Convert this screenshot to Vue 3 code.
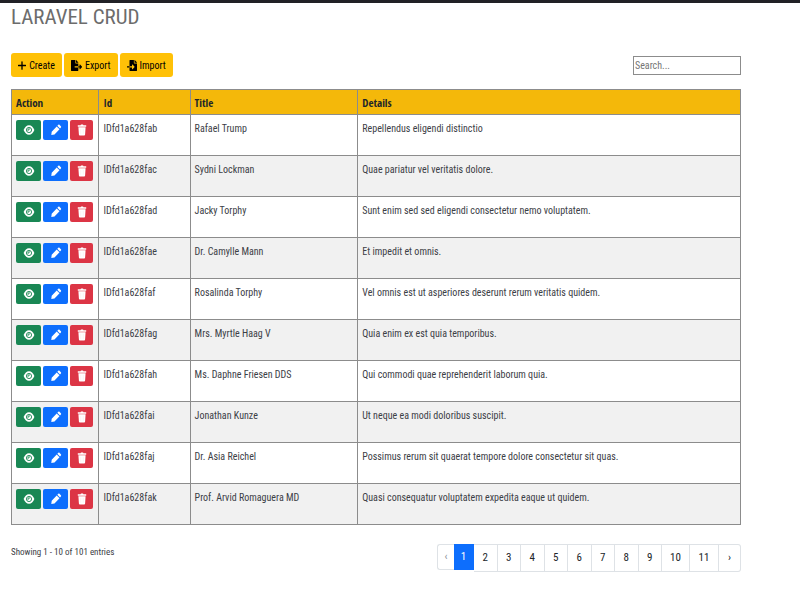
<script setup>
import { ref, computed } from 'vue'

const search = ref('')
const page = ref(1)
const pages = [1, 2, 3, 4, 5, 6, 7, 8, 9, 10, 11]

const entries = [
  { id: 'IDfd1a628fab', title: 'Rafael Trump', details: 'Repellendus eligendi distinctio' },
  { id: 'IDfd1a628fac', title: 'Sydni Lockman', details: 'Quae pariatur vel veritatis dolore.' },
  { id: 'IDfd1a628fad', title: 'Jacky Torphy', details: 'Sunt enim sed sed eligendi consectetur nemo voluptatem.' },
  { id: 'IDfd1a628fae', title: 'Dr. Camylle Mann', details: 'Et impedit et omnis.' },
  { id: 'IDfd1a628faf', title: 'Rosalinda Torphy', details: 'Vel omnis est ut asperiores deserunt rerum veritatis quidem.' },
  { id: 'IDfd1a628fag', title: 'Mrs. Myrtle Haag V', details: 'Quia enim ex est quia temporibus.' },
  { id: 'IDfd1a628fah', title: 'Ms. Daphne Friesen DDS', details: 'Qui commodi quae reprehenderit laborum quia.' },
  { id: 'IDfd1a628fai', title: 'Jonathan Kunze', details: 'Ut neque ea modi doloribus suscipit.' },
  { id: 'IDfd1a628faj', title: 'Dr. Asia Reichel', details: 'Possimus rerum sit quaerat tempore dolore consectetur sit quas.' },
  { id: 'IDfd1a628fak', title: 'Prof. Arvid Romaguera MD', details: 'Quasi consequatur voluptatem expedita eaque ut quidem.' }
]

const rows = computed(() => {
  const q = search.value.toLowerCase()
  return entries.filter((e) => (e.id + e.title + e.details).toLowerCase().includes(q))
})
</script>

<template>
  <div class="page">
    <main class="content">
      <h1>LARAVEL CRUD</h1>

      <div class="toolbar">
        <div class="tools">
          <button type="button" class="tool">
            <svg class="plus" viewBox="0 0 8 9" aria-hidden="true"><path d="M4 .8v7.4M.5 4.500h7" stroke="currentColor" stroke-width="1.300" stroke-linecap="round" /></svg>
            Create
          </button>
          <button type="button" class="tool">
            <svg class="file" viewBox="0 0 576 512" preserveAspectRatio="none" aria-hidden="true"><path fill="currentColor" d="M384 121.900c0-6.300-2.500-12.400-7-16.900L279.100 7c-4.500-4.500-10.600-7-17-7H256v128h128zM571 308l-95.700-96.400c-10.100-10.100-27.400-3-27.400 11.300V288h-64v64h64v65.200c0 14.300 17.300 21.400 27.400 11.300L571 332c6.600-6.600 6.600-17.400 0-24zm-379 28v-32c0-8.800 7.200-16 16-16h176V160H248c-13.200 0-24-10.800-24-24V0H24C10.700 0 0 10.700 0 24v464c0 13.300 10.700 24 24 24h336c13.300 0 24-10.700 24-24V352H208c-8.800 0-16-7.200-16-16z" /></svg>
            Export
          </button>
          <button type="button" class="tool">
            <svg class="file import" viewBox="0 0 512 512" preserveAspectRatio="none" aria-hidden="true"><path fill="currentColor" d="M16 288c-8.800 0-16 7.200-16 16v32c0 8.800 7.200 16 16 16h112v-64zm489-183L407.100 7c-4.500-4.500-10.600-7-17-7H384v128h128v-6.100c0-6.300-2.500-12.400-7-16.900zm-153 31V0H152c-13.300 0-24 10.700-24 24v264h128v-65.200c0-14.300 17.300-21.400 27.400-11.300L379 308c6.600 6.700 6.600 17.400 0 24l-95.700 96.400c-10.100 10.100-27.400 3-27.400-11.300V352H128v136c0 13.300 10.700 24 24 24h336c13.300 0 24-10.700 24-24V160H376c-13.200 0-24-10.800-24-24z" /></svg>
            Import
          </button>
        </div>
        <input v-model="search" class="search" type="search" placeholder="Search..." aria-label="Search entries" />
      </div>

      <table>
        <colgroup>
          <col class="col-action" />
          <col class="col-id" />
          <col class="col-title" />
          <col />
        </colgroup>
        <thead>
          <tr>
            <th scope="col">Action</th>
            <th scope="col">Id</th>
            <th scope="col">Title</th>
            <th scope="col">Details</th>
          </tr>
        </thead>
        <tbody>
          <tr v-for="entry in rows" :key="entry.id">
            <td>
              <div class="actions">
                <button type="button" class="view" :aria-label="'View ' + entry.title">
                  <svg viewBox="0 0 12 12" aria-hidden="true">
                    <path d="M.6 6C2 3 3.600 1.300 6 1.300S10 3 11.400 6C10 9 8.400 10.700 6 10.700S2 9 .6 6z" fill="#fff" />
                    <circle cx="6" cy="6" r="2.600" fill="#fff" stroke="#198754" stroke-width=".9" />
                    <path d="M6 4v2H4.200" fill="none" stroke="#198754" stroke-width=".9" />
                  </svg>
                </button>
                <button type="button" class="edit" :aria-label="'Edit ' + entry.title">
                  <svg viewBox="0 0 12 12" aria-hidden="true">
                    <path d="M1.300 11l.4-3.300 5-5.300 2.800 2.800-5 5.300zM7.300 1.800l.9-.9c.4-.4 1-.4 1.400 0l1.300 1.300c.4.4.4 1 0 1.400l-.9.9z" fill="#fff" />
                  </svg>
                </button>
                <button type="button" class="delete" :aria-label="'Delete ' + entry.title">
                  <svg viewBox="0 0 12 12" aria-hidden="true">
                    <path d="M1.800 1.200h2.700l.5-.8h2l.5.8h2.700v1.500H1.800zM2.400 3.200h7.200L9.100 10.600c0 .6-.4.900-.9.900H3.800c-.5 0-.9-.3-.9-.9z" fill="#fff" />
                    <path d="M4.700 4.800v5M7.300 4.800v5" stroke="#f7d4d7" stroke-width=".3" />
                  </svg>
                </button>
              </div>
            </td>
            <td>{{ entry.id }}</td>
            <td>{{ entry.title }}</td>
            <td>{{ entry.details }}</td>
          </tr>
        </tbody>
      </table>

      <footer class="footer">
        <p>Showing 1 - 10 of 101 entries</p>
        <nav class="pagination" aria-label="Pages">
          <button type="button" class="prev" :disabled="page === 1" aria-label="Previous" @click="page--">‹</button>
          <button
            v-for="n in pages"
            :key="n"
            type="button"
            :class="{ active: n === page }"
            :aria-current="n === page ? 'page' : undefined"
            @click="page = n"
          >{{ n }}</button>
          <button type="button" class="next" :disabled="page === 11" aria-label="Next" @click="page++">›</button>
        </nav>
      </footer>
    </main>
  </div>
</template>

<style>
body {
  background: #fff;
}
</style>

<style scoped>
.page {
  border-top: 3px solid #212126;
  font-family: "Roboto Condensed", Roboto, "Noto Sans", sans-serif;
  font-size: 10px;
  line-height: 18px;
  color: #3c4046;
}

.content {
  padding: 0 59px 0 11px;
}

h1 {
  margin: 0;
  font-size: 21px;
  line-height: 28px;
  font-weight: 400;
  color: #6c6c6c;
}

button,
input {
  font: inherit;
  box-sizing: border-box;
}

button {
  padding: 0;
  border: 0;
  cursor: pointer;
}

.toolbar {
  display: flex;
  justify-content: space-between;
  align-items: center;
  height: 24px;
  margin-top: 22px;
}

.tools {
  display: flex;
  gap: 2px;
}

.tool {
  display: flex;
  align-items: center;
  justify-content: center;
  gap: 3px;
  min-width: 51px;
  height: 24px;
  padding: 1px 7px 0;
  border-radius: 3px;
  background: #ffc107;
  color: #000;
}

.plus {
  width: 8px;
  height: 9px;
}

.file {
  width: 11px;
  height: 11px;
}

.import {
  width: 10px;
}

.search {
  width: 108px;
  height: 19px;
  padding: 0 1px;
  border: 1px solid #8c8c8c;
  border-radius: 0;
  background: #fff;
  color: #3c4046;
  appearance: none;
}

.search::placeholder {
  color: #757575;
  opacity: 1;
}

table {
  width: 100%;
  margin-top: 12px;
  border-collapse: collapse;
  table-layout: fixed;
}

.col-action {
  width: 12%;
}

.col-id {
  width: 12.5%;
}

.col-title {
  width: 23%;
}

th,
td {
  box-sizing: border-box;
  border: 1px solid #8c8c8c;
  padding: 5px 4px 0;
  text-align: left;
  vertical-align: top;
}

th {
  height: 25px;
  padding-top: 4px;
  background: #f4b80a;
  color: #212529;
  font-family: "Open Sans Condensed", "Roboto Condensed", Roboto, sans-serif;
  font-size: 11px;
  font-weight: 700;
}

td {
  height: 41px;
}

tbody tr:nth-child(even) {
  background: #f1f1f1;
}

.actions {
  display: flex;
  gap: 2px;
}

.actions button {
  display: flex;
  align-items: center;
  justify-content: center;
  width: 25px;
  height: 20px;
  border-radius: 2px;
}

.actions svg {
  width: 12px;
  height: 12px;
}

.actions .view {
  background: #198754;
}

.actions .edit {
  background: #0d6efd;
}

.actions .delete {
  width: 23px;
  background: #dc3545;
}

.footer {
  display: flex;
  justify-content: space-between;
  align-items: flex-start;
  margin-top: 19px;
}

.footer p {
  margin: 0;
  font-size: 9px;
  line-height: 16px;
}

.pagination {
  display: grid;
  grid-template-columns: 17px 20px repeat(8, 1fr) 28px 29px 22px;
  align-items: start;
  width: 304px;
  font-size: 11px;
}

.pagination button {
  height: 28px;
  border: solid #dee2e6;
  border-width: 1px 1px 1px 0;
  background: #fff;
  color: #212529;
}

.pagination .prev {
  height: 26px;
  border-width: 1px 0 1px 1px;
  border-radius: 3px 0 0 3px;
  color: #8a9096;
}

.pagination .active {
  height: 26px;
  border-color: #0d6efd;
  background: #0d6efd;
  color: #fff;
}

.pagination .next {
  border-radius: 0 3px 3px 0;
}
</style>
